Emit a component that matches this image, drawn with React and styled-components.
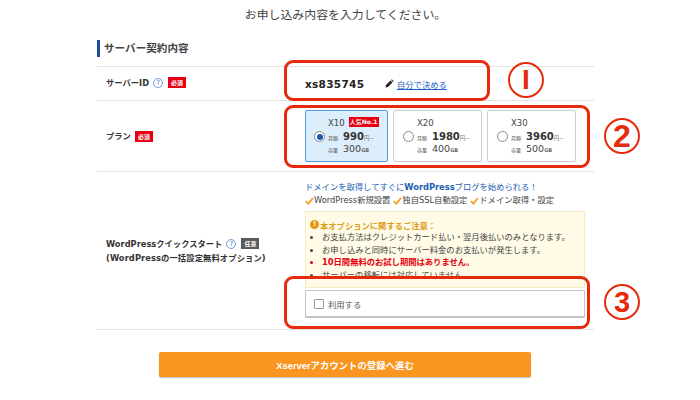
import React from "react";
import styled, { createGlobalStyle } from "styled-components";

const JP = `"DejaVu Sans", "Noto Sans CJK JP", sans-serif`;

const Global = createGlobalStyle`
  html, body {
    margin: 0;
    padding: 0;
    background: #fff;
    font-family: ${JP};
    color: #333;
  }
  * { box-sizing: border-box; }
`;

const Page = styled.div`
  position: relative;
  width: 700px;
  height: 400px;
  overflow: hidden;
  padding: 7px 106px 0 97px;
`;

const Lead = styled.p`
  margin: 0;
  height: 16px;
  line-height: 16px;
  font-size: 11.9px;
  text-align: center;
  color: #444;
`;

const SectionTitle = styled.h2`
  margin: 17px 0 9px;
  height: 17px;
  line-height: 17px;
  border-left: 3px solid #1c4f9c;
  padding-left: 4px;
  font-size: 10.6px;
  font-weight: 700;
  color: #444;
`;

const Row = styled.div`
  display: grid;
  grid-template-columns: 208px 1fr;
  height: ${(p) => p.$h}px;
  border-top: 1px solid #e3e3e3;
`;

const LastRule = styled.div`
  border-top: 1px solid #e3e3e3;
  height: 0;
`;

const Label = styled.div`
  display: flex;
  flex-wrap: wrap;
  align-items: center;
  align-content: center;
  gap: 0 4px;
  padding-left: 9px;
  padding-bottom: ${(p) => p.$lift || 0}px;
  font-size: 8.3px;
  font-weight: 700;
  color: #333;
  line-height: 14px;
`;

const LabelNote = styled.div`
  letter-spacing: 0.1px;
`;

const Help = styled.span`
  width: 10px;
  height: 10px;
  border: 1px solid #6f9fd8;
  border-radius: 50%;
  color: #3b78c4;
  font-size: 7px;
  font-weight: 400;
  line-height: 8px;
  text-align: center;
`;

const Badge = styled.span`
  display: inline-block;
  width: 18px;
  height: 11px;
  margin-left: ${(p) => p.$gap || 0}px;
  line-height: 11px;
  font-size: 6px;
  text-align: center;
  font-weight: 700;
  color: #fff;
  background: ${(p) => (p.$grey ? "#5a5a5a" : "#e60012")};
`;

const Value = styled.div`
  display: flex;
  align-items: center;
`;

const ServerId = styled.strong`
  width: 80px;
  font-size: 10.5px;
  letter-spacing: 0.3px;
  color: #222;
`;

const EditLink = styled.a`
  display: flex;
  align-items: center;
  gap: 3px;
  font-size: 8.3px;
  color: #1a62c4;
  text-decoration: underline;
  svg { color: #222; }
`;

const Plans = styled.div`
  display: flex;
  align-items: center;
  gap: 5px;
`;

const Plan = styled.div`
  display: grid;
  grid-template-columns: 14px 1fr;
  width: ${(p) => p.$w}px;
  height: 52px;
  padding: 5px 0 0 ${(p) => (p.$on ? 8 : 9)}px;
  border: 1px solid ${(p) => (p.$on ? "#5b9bd5" : "#cfcfcf")};
  border-radius: 2px;
  background: ${(p) => (p.$on ? "#dcedfb" : "#fff")};
`;

const Radio = styled.span`
  width: 11px;
  height: 11px;
  margin-top: 15px;
  border-radius: 50%;
  border: 1px solid #888;
  background: #fff;
  display: flex;
  align-items: center;
  justify-content: center;
  &::after {
    content: "";
    width: 6px;
    height: 6px;
    border-radius: 50%;
    background: ${(p) => (p.$on ? "#1558b0" : "transparent")};
  }
`;

const PlanText = styled.div`
  display: flex;
  flex-direction: column;
`;

const PlanName = styled.div`
  display: flex;
  align-items: center;
  gap: 4px;
  height: 14px;
  font-size: 8.5px;
  color: #444;
`;

const Popular = styled.span`
  width: 30px;
  height: 10px;
  margin-top: -2px;
  line-height: 10px;
  background: #e60012;
  color: #fff;
  font-size: 6px;
  font-weight: 700;
  text-align: center;
`;

const PlanLine = styled.div`
  display: flex;
  align-items: baseline;
  height: ${(p) => p.$h}px;
  line-height: ${(p) => p.$h}px;
  font-size: 5px;
  color: #555;
`;

const LineKey = styled.span`
  width: 15px;
`;

const Price = styled.span`
  font-size: 10px;
  font-weight: 700;
  color: #333;
  span { font-size: 5.5px; font-weight: 400; color: #777; }
`;

const Size = styled.span`
  font-size: 9.5px;
  color: #444;
  span { font-size: 5px; font-weight: 700; color: #666; }
`;

const Quick = styled.div`
  padding-top: 9px;
`;

const QuickTitle = styled.div`
  height: 13px;
  line-height: 13px;
  font-size: 8.3px;
  color: #1a5eb0;
  white-space: nowrap;
`;

const Features = styled.div`
  display: flex;
  gap: 3px;
  height: 13px;
  line-height: 13px;
  font-size: 8.3px;
  color: #444;
  white-space: nowrap;
`;

const Feature = styled.span`
  display: flex;
  align-items: center;
`;

const Notice = styled.div`
  width: 280px;
  height: 77px;
  margin-top: 4px;
  padding: 6px 4px 0;
  overflow: hidden;
  border: 1px solid #f5ecc4;
  background: #fffbe6;
`;

const NoticeTitle = styled.div`
  display: flex;
  align-items: center;
  gap: 1px;
  height: 13px;
  font-size: 8.3px;
  font-weight: 700;
  color: #dc9c20;
  i {
    width: 9px;
    height: 9px;
    line-height: 9px;
    border-radius: 50%;
    background: #e39a12;
    color: #fff;
    font-style: normal;
    font-weight: 700;
    font-size: 7px;
    text-align: center;
  }
`;

const NoticeList = styled.ul`
  margin: 0;
  padding: 0 0 0 12px;
  font-size: 8.3px;
  line-height: 12.7px;
  color: #444;
  white-space: nowrap;
`;

const Warn = styled.li`
  color: #e60012;
  font-weight: 700;
`;

const UseBox = styled.label`
  display: flex;
  align-items: center;
  gap: 4px;
  width: 280px;
  height: 28px;
  margin-top: 2px;
  padding-left: 8px;
  border: 1px solid #c4c4c4;
  border-bottom-width: 2px;
  border-radius: 1px;
  font-size: 8.3px;
  color: #555;
`;

const Check = styled.span`
  width: 10px;
  height: 10px;
  border: 1px solid #999;
  border-radius: 1px;
`;

const Footer = styled.div`
  display: flex;
  justify-content: center;
  padding: 22px 1px 0 0;
`;

const Submit = styled.button`
  width: 372px;
  height: 25px;
  padding: 0;
  border: 0;
  border-radius: 2px;
  background: #f99520;
  box-shadow: 0 1px 1px #b9bcc4;
  color: #fff;
  font-family: "Liberation Sans", "Noto Sans CJK JP", sans-serif;
  font-size: 9.4px;
  font-weight: 700;
`;

const Frame = styled.div`
  position: absolute;
  left: ${(p) => p.$x}px;
  top: ${(p) => p.$y}px;
  width: ${(p) => p.$w}px;
  height: ${(p) => p.$h}px;
  border: 3px solid #e62a0c;
  border-radius: 9px;
  pointer-events: none;
`;

const Numeral = styled.span`
  position: absolute;
  left: ${(p) => p.$x}px;
  top: ${(p) => p.$y}px;
  width: 36px;
  height: 36px;
  display: flex;
  align-items: center;
  justify-content: center;
  border: 2px solid #e62a0c;
  border-radius: 50%;
  color: #e62a0c;
  font-family: "Liberation Sans", sans-serif;
  font-size: ${(p) => p.$size}px;
  font-weight: 700;
  line-height: 1;
`;

const PLANS = [
  { name: "X10", price: "990", size: "300", on: true, w: 83 },
  { name: "X20", price: "1980", size: "400", w: 89 },
  { name: "X30", price: "3960", size: "500", w: 89 },
];

const Pencil = () => (
  <svg width="9" height="9" viewBox="0 0 10 10">
    <path fill="currentColor" d="M0.5 9.5l0.6-2.8 5-5 2.2 2.2-5 5zM6.8 1l0.8-.7 2.1 2.1-.7.8z" />
  </svg>
);

const Tick = () => (
  <svg width="9" height="8" viewBox="0 0 9 8">
    <path fill="none" stroke="#f0a020" strokeWidth="1.8" d="M0.8 4l2.500 2.600L8 1" />
  </svg>
);

export default function App() {
  return (
    <Page>
      <Global />
      <Lead>お申し込み内容を入力してください。</Lead>
      <SectionTitle>サーバー契約内容</SectionTitle>

      <Row $h={34}>
        <Label $lift={2}>
          サーバーID <Help>?</Help> <Badge $gap={1}>必須</Badge>
        </Label>
        <Value>
          <ServerId>xs835745</ServerId>
          <EditLink>
            <Pencil />
            自分で決める
          </EditLink>
        </Value>
      </Row>

      <Row $h={71}>
        <Label>
          プラン <Badge>必須</Badge>
        </Label>
        <Plans>
          {PLANS.map((p) => (
            <Plan key={p.name} $on={p.on} $w={p.w}>
              <Radio $on={p.on} />
              <PlanText>
                <PlanName>
                  {p.name}
                  {p.on && <Popular>人気No.1</Popular>}
                </PlanName>
                <PlanLine $h={13}>
                  <LineKey>月額</LineKey>
                  <Price>{p.price}<span>円~</span></Price>
                </PlanLine>
                <PlanLine $h={12}>
                  <LineKey>容量</LineKey>
                  <Size>{p.size}<span>GB</span></Size>
                </PlanLine>
              </PlanText>
            </Plan>
          ))}
        </Plans>
      </Row>

      <Row $h={158}>
        <Label>
          WordPressクイックスタート <Help>?</Help> <Badge $gap={1} $grey>任意</Badge>
          <LabelNote>(WordPressの一括設定無料オプション)</LabelNote>
        </Label>
        <Quick>
          <QuickTitle>ドメインを取得してすぐに<b>WordPress</b>ブログを始められる！</QuickTitle>
          <Features>
            <Feature><Tick />WordPress新規設置</Feature>
            <Feature><Tick />独自SSL自動設定</Feature>
            <Feature><Tick />ドメイン取得・設定</Feature>
          </Features>
          <Notice>
            <NoticeTitle>
              <i>!</i>本オプションに関するご注意：
            </NoticeTitle>
            <NoticeList>
              <li>お支払方法はクレジットカード払い・翌月後払いのみとなります。</li>
              <li>お申し込みと同時にサーバー料金のお支払いが発生します。</li>
              <Warn>10日間無料のお試し期間はありません。</Warn>
              <li>サーバーの移転には対応していません。</li>
            </NoticeList>
          </Notice>
          <UseBox>
            <Check />
            利用する
          </UseBox>
        </Quick>
      </Row>
      <LastRule />

      <Footer>
        <Submit>Xserverアカウントの登録へ進む</Submit>
      </Footer>

      <Frame $x={284} $y={60} $w={206} $h={41} />
      <Frame $x={284} $y={105} $w={306} $h={63} />
      <Frame $x={284} $y={276} $w={306} $h={53} />

      <Numeral $x={508} $y={62} $size={28}>I</Numeral>
      <Numeral $x={604} $y={118} $size={32}>2</Numeral>
      <Numeral $x={604} $y={284} $size={29}>3</Numeral>
    </Page>
  );
}
